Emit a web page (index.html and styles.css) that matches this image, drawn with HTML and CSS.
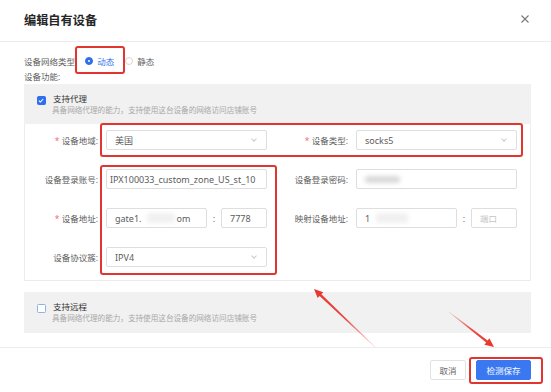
FILE: index.html
```html
<!DOCTYPE html>
<html lang="zh-CN">
<head>
<meta charset="utf-8">
<title>编辑自有设备</title>
<link rel="stylesheet" href="styles.css">
</head>
<body>
<div class="dialog">
  <div class="header">
    <div class="title">编辑自有设备</div>
    <svg class="close" width="8" height="8" viewBox="0 0 8 8"><path d="M0.5 0.5L7.5 7.5M7.5 0.5L0.5 7.5" stroke="#777" stroke-width="1.1" fill="none"/></svg>
  </div>
  <div class="body">
    <div class="line-type">
      <span class="lbl">设备网络类型:</span>
      <span class="radio on"></span><span class="radio-text on-text">动态</span>
      <span class="radio"></span><span class="radio-text">静态</span>
    </div>
    <div class="line-func">设备功能:</div>

    <div class="panel">
      <div class="panel-head">
        <span class="check on"><svg width="9" height="9" viewBox="0 0 9 9"><path d="M2 4.6L3.8 6.3L7 2.8" stroke="#fff" stroke-width="1.2" fill="none"/></svg></span>
        <div class="head-text">
          <div class="head-title">支持代理</div>
          <div class="head-sub">具备网络代理的能力，支持使用这台设备的网络访问店铺账号</div>
        </div>
      </div>
      <div class="panel-content">
        <div class="field">
          <div class="flabel"><span class="req">*</span> 设备地域:</div>
          <div class="ctrl select"><span>美国</span><i class="chev"></i></div>
        </div>
        <div class="field">
          <div class="flabel"><span class="req">*</span> 设备类型:</div>
          <div class="ctrl select"><span>socks5</span><i class="chev"></i></div>
        </div>
        <div class="field">
          <div class="flabel">设备登录账号:</div>
          <div class="ctrl input tight"><span>IPX100033_custom_zone_US_st_10</span></div>
        </div>
        <div class="field">
          <div class="flabel">设备登录密码:</div>
          <div class="ctrl input"><span class="blur w35"></span></div>
        </div>
        <div class="field">
          <div class="flabel"><span class="req">*</span> 设备地址:</div>
          <div class="ctrl pair">
            <div class="input host"><span>gate1.</span><span class="blur w28"></span><span>om</span></div>
            <span class="colon">:</span>
            <div class="input port"><span>7778</span></div>
          </div>
        </div>
        <div class="field">
          <div class="flabel">映射设备地址:</div>
          <div class="ctrl pair">
            <div class="input host"><span>1</span><span class="blur w32"></span></div>
            <span class="colon">:</span>
            <div class="input port"><span class="ph">端口</span></div>
          </div>
        </div>
        <div class="field">
          <div class="flabel">设备协议簇:</div>
          <div class="ctrl select"><span>IPV4</span><i class="chev"></i></div>
        </div>
      </div>
    </div>

    <div class="panel2">
      <span class="check"></span>
      <div class="head-text">
        <div class="head-title">支持远程</div>
        <div class="head-sub">具备网络代理的能力，支持使用这台设备的网络访问店铺账号</div>
      </div>
    </div>
  </div>
  <div class="footer">
    <button class="btn">取消</button>
    <button class="btn primary">检测保存</button>
  </div>

  <div class="mark m-radio"></div>
  <div class="mark m-top"></div>
  <div class="mark m-left"></div>
  <div class="mark m-btn"></div>
  <svg class="arrows" width="551" height="392" viewBox="0 0 551 392">
    <defs>
      <linearGradient id="g1" x1="375" y1="347" x2="314" y2="289" gradientUnits="userSpaceOnUse">
        <stop offset="0" stop-color="#e8362c" stop-opacity="0.15"/>
        <stop offset="0.5" stop-color="#e8362c" stop-opacity="0.9"/>
        <stop offset="1" stop-color="#e8362c"/>
      </linearGradient>
      <linearGradient id="g2" x1="449" y1="312" x2="494" y2="347" gradientUnits="userSpaceOnUse">
        <stop offset="0" stop-color="#e8362c" stop-opacity="0.15"/>
        <stop offset="0.5" stop-color="#e8362c" stop-opacity="0.9"/>
        <stop offset="1" stop-color="#e8362c"/>
      </linearGradient>
    </defs>
    <polygon fill="url(#g1)" points="375.2,346.8 321.4,294.3 323.3,292.3 314,289 317.7,298.1 319.6,296.1 374.8,347.2"/>
    <polygon fill="url(#g2)" points="448.8,312.2 486.2,342.4 484.4,344.7 494,347 489.4,338.3 487.6,340.6 449.2,311.8"/>
  </svg>
</div>
</body>
</html>
```

FILE: styles.css
```css
* { box-sizing: border-box; }
html, body { margin: 0; padding: 0; background: #fff; }
body {
  font-family: "Noto Sans", "Noto Sans CJK SC", sans-serif;
  color: #606060;
}
.dialog {
  position: relative;
  width: 551px;
  height: 392px;
  overflow: hidden;
  background: #fff;
}
.header {
  height: 42px;
  border-bottom: 1px solid #ececec;
  display: flex;
  align-items: center;
  justify-content: space-between;
  padding: 0 22px 4px 24px;
}
.title {
  font-size: 12.2px;
  font-weight: bold;
  color: #262626;
  line-height: 16px;
  padding-top: 5px;
}
.close { display: block; }

.body { padding: 11px 20px 14px 24px; }
.line-type {
  height: 16px;
  display: flex;
  align-items: center;
  font-size: 8.5px;
}
.lbl { margin-right: 8px; color: #606060; white-space: nowrap; }
.radio {
  width: 8px; height: 8px;
  border-radius: 50%;
  border: 1px solid #d6d6d6;
  background: #fff;
  margin-right: 4px;
  position: relative;
  flex-shrink: 0;
}
.radio.on { background: #2f6fed; border-color: #2f6fed; }
.radio.on::after {
  content: "";
  position: absolute;
  left: 2px; top: 2px;
  width: 2px; height: 2px;
  border-radius: 50%;
  background: #fff;
}
.radio-text { margin-right: 11px; color: #666; }
.on-text { color: #2f6fed; }
.line-func { height: 15px; line-height: 15px; font-size: 8.5px; }

.panel { width: 507px; }
.panel-head, .panel2 {
  background: #f1f1f1;
  height: 40px;
  display: flex;
  align-items: flex-start;
  padding: 12px 0 0 13px;
}
.panel2 { height: 41px; margin-top: 11px; padding-top: 12px; width: 507px; }
.check {
  width: 9px; height: 9px;
  border-radius: 1.5px;
  border: 1px solid #8fb0e8;
  background: #fff;
  margin-right: 7px;
  display: flex;
  flex-shrink: 0;
}
.check.on { background: #2f6fed; border-color: #2f6fed; }
.check svg { margin: -1px 0 0 -1px; }
.head-text { margin-top: -3px; }
.head-title { font-size: 8.5px; line-height: 12px; color: #333; }
.head-sub { font-size: 7.6px; line-height: 11px; color: #a8a8a8; margin-left: -1px; }

.panel-content {
  border: 1px solid #ececec;
  border-top: none;
  padding: 6px 13px 13px 0;
  display: grid;
  grid-template-columns: 242px 242px;
  column-gap: 8px;
  row-gap: 19px;
}
.field { display: flex; align-items: center; height: 20px; }
.flabel {
  width: 73px;
  text-align: right;
  font-size: 8.5px;
  color: #606060;
  margin-right: 8px;
  white-space: nowrap;
}
.req { color: #f56c6c; }
.ctrl { width: 161px; height: 20px; }
.select, .input {
  border: 1px solid #dedede;
  border-radius: 2px;
  background: #fff;
  display: flex;
  align-items: center;
  padding: 0 8px;
  font-size: 9px;
  color: #5c5c5c;
  white-space: nowrap;
  overflow: hidden;
}
.input.tight { padding-left: 3px; }
.select { justify-content: space-between; }
.chev {
  width: 4px; height: 4px;
  border-right: 1px solid #c8c8c8;
  border-bottom: 1px solid #c8c8c8;
  transform: rotate(45deg);
  margin: -2px 2px 0 0;
}
.pair { display: flex; align-items: center; }
.host { width: 101px; height: 20px; }
.port { width: 46px; height: 20px; }
.colon { width: 14px; text-align: center; font-size: 9px; color: #666; }
.ph { color: #c4c4c4; font-size: 8.5px; }
.blur {
  display: inline-block;
  height: 7px;
  background: #d9d9d9;
  filter: blur(2px);
  border-radius: 3px;
}
.host .blur { background: #f0f0f0; height: 10px; margin: 0 1px 0 6px; }
.w35 { width: 35px; }
.w28 { width: 28px; }
.w32 { width: 32px; }

.footer {
  border-top: 1px solid #ececec;
  padding: 12px 20px 0 0;
  display: flex;
  justify-content: flex-end;
  gap: 10px;
}
.btn {
  height: 20px;
  border: 1px solid #e2e2e2;
  background: #fff;
  border-radius: 2px;
  font-family: "Noto Sans", "Noto Sans CJK SC", sans-serif;
  font-size: 8.5px;
  color: #666;
  padding: 0;
  width: 36px;
}
.btn.primary {
  width: 55px;
  background: #3a78f2;
  border-color: #3a78f2;
  color: #fff;
}

.mark {
  position: absolute;
  border: 2px solid #e2352f;
  border-radius: 3px;
  pointer-events: none;
}
.m-radio { left: 75px; top: 46px; width: 50px; height: 28px; }
.m-top { left: 100px; top: 123px; width: 423px; height: 34px; }
.m-left { left: 100px; top: 165px; width: 177px; height: 110px; }
.m-btn { left: 469px; top: 357px; width: 74px; height: 27px; }
.arrows { position: absolute; left: 0; top: 0; pointer-events: none; }
```
